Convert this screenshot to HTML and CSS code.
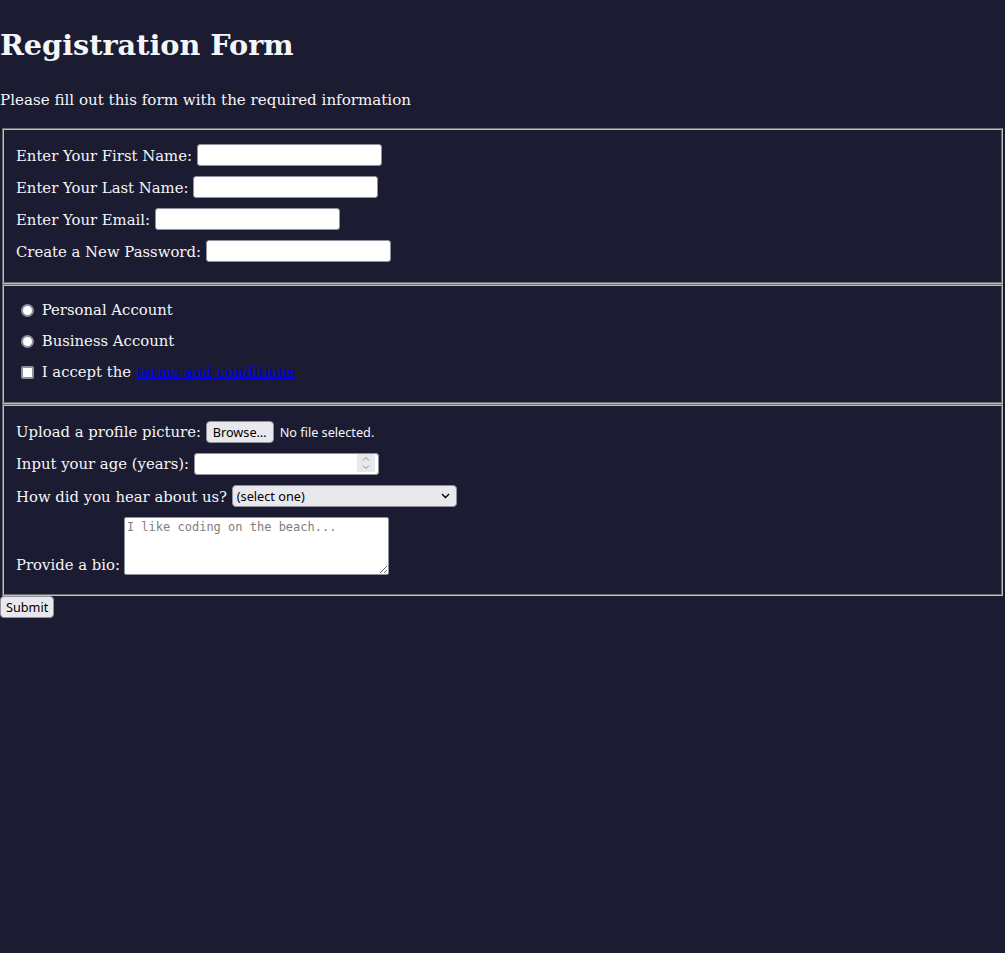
FILE: index.html
```html
<!DOCTYPE html>
<html lang="en">
  <head>
    <meta charset="UTF-8">
    <title>Registration Form</title>
    <link rel="stylesheet" href="styles.css">
  </head>
  <body class="page">
    <h1 class="title">Registration Form</h1>
    <p class="intro">Please fill out this form with the required information</p>
    <form class="form" method="post" action="#">
      <fieldset class="group">
        <label class="row" for="first-name">Enter Your First Name: <input class="field" id="first-name" type="text"></label>
        <label class="row" for="last-name">Enter Your Last Name: <input class="field" id="last-name" type="text"></label>
        <label class="row" for="email">Enter Your Email: <input class="field" id="email" type="email"></label>
        <label class="row" for="new-password">Create a New Password: <input class="field" id="new-password" type="password"></label>
      </fieldset>
      <fieldset class="group">
        <label class="row row-choice" for="personal-account"><input class="radio" id="personal-account" type="radio" name="account-type"> Personal Account</label>
        <label class="row row-choice" for="business-account"><input class="radio" id="business-account" type="radio" name="account-type"> Business Account</label>
        <label class="row row-choice" for="terms"><input class="check" id="terms" type="checkbox"> I accept the <a class="link" href="#">terms and conditions</a></label>
      </fieldset>
      <fieldset class="group">
        <div class="row">Upload a profile picture: <button type="button" class="btn file-btn">Browse…</button><span class="file-note">No file selected.</span></div>
        <label class="row" for="age">Input your age (years): <span class="num-wrap"><input class="field num" id="age" type="number" min="13" max="120"><svg class="spin" width="18" height="18" viewBox="0 0 18 18"><rect width="18" height="18" fill="#e9e9ed"/><path d="M6 6.5 L9 3.5 L12 6.5" fill="none" stroke="#8f8f9d" stroke-width="1"/><path d="M6 11.5 L9 14.5 L12 11.5" fill="none" stroke="#8f8f9d" stroke-width="1"/></svg></span></label>
        <label class="row" for="referrer">How did you hear about us? <span class="select-wrap"><select class="select" id="referrer">
              <option value="">(select one)</option>
              <option value="1">freeCodeCamp News</option>
              <option value="2">freeCodeCamp YouTube Channel</option>
              <option value="3">freeCodeCamp Forum</option>
              <option value="4">Other</option>
            </select><svg class="chev" width="9" height="6" viewBox="0 0 9 6"><path d="M1 1 L4.5 4.5 L8 1" fill="none" stroke="#000" stroke-width="1.4"/></svg></span></label>
        <label class="row row-bio" for="bio"><span class="bio-label">Provide a bio:</span><textarea class="bio" id="bio" rows="3" cols="30" placeholder="I like coding on the beach..."></textarea></label>
      </fieldset>
      <input class="btn submit" type="submit" value="Submit">
    </form>
  </body>
</html>
```

FILE: styles.css
```css
.page {
  width: 100%;
  height: 100vh;
  margin: 0;
  background-color: #1b1b32;
  color: #f5f6f7;
  font-family: "DejaVu Serif", serif;
  font-size: 14.85px;
}

.title {
  margin: 23px 0 22px;
  font-size: 28.7px;
  line-height: 44px;
  font-weight: bold;
}

.intro {
  margin: 0 0 17px;
  font-size: 15.1px;
  line-height: 22px;
}

.form {
  margin: 0;
}

.group {
  margin: 0 2px;
  padding: 5.6px 12px 10px;
  border: 2px groove #c0c0c0;
  min-width: 0;
}

.row {
  display: block;
  margin: 8px 0;
  line-height: 24px;
}

.row-choice {
  line-height: 23px;
}

.field {
  box-sizing: border-box;
  width: 185px;
  height: 22px;
  margin: 0;
  padding: 1px 3px;
  vertical-align: top;
  background: #fff;
  border: 1px solid #8f8f9d;
  border-radius: 3px;
  font: 12.7px "Noto Sans", sans-serif;
  color: #000;
}

.radio,
.check {
  appearance: none;
  -webkit-appearance: none;
  box-sizing: border-box;
  width: 13px;
  height: 13px;
  margin: 5px 3px 0 5px;
  vertical-align: top;
  background: #fff;
  border: 2px solid #8f8f9d;
}

.radio {
  border-radius: 50%;
}

.check {
  margin-left: 5px;
  border-radius: 2px;
}

.link {
  color: #0000ee;
  text-decoration: underline;
}

.btn {
  box-sizing: border-box;
  height: 22px;
  padding: 0 6px;
  background: #e9e9ed;
  border: 1px solid #8f8f9d;
  border-radius: 4px;
  color: #000;
  font: 12.7px/18px "Noto Sans", sans-serif;
  vertical-align: top;
}

.file-btn {
  margin: 1px 0 0;
}

.file-note {
  margin-left: 6px;
  font-family: "Noto Sans", sans-serif;
  font-size: 12.7px;
  line-height: 1;
}

.num-wrap,
.select-wrap {
  position: relative;
  display: inline-block;
  vertical-align: top;
}

.num-wrap {
  margin-top: 1px;
}

.num {
  appearance: textfield;
  -moz-appearance: textfield;
}

.num::-webkit-inner-spin-button,
.num::-webkit-outer-spin-button {
  -webkit-appearance: none;
  margin: 0;
}

.spin {
  position: absolute;
  right: 4px;
  top: 1px;
  pointer-events: none;
}

.select {
  appearance: none;
  -webkit-appearance: none;
  box-sizing: border-box;
  width: 225px;
  height: 22px;
  margin: 0;
  padding: 0 4px;
  background: #e9e9ed;
  border: 1px solid #8f8f9d;
  border-radius: 4px;
  color: #000;
  font: 12.7px "Noto Sans", sans-serif;
  vertical-align: top;
}

.chev {
  position: absolute;
  right: 7px;
  top: 8px;
  pointer-events: none;
}

.row-bio {
  display: flex;
  align-items: flex-end;
  gap: 4px;
}

.bio-label {
  line-height: 22px;
}

.bio {
  box-sizing: border-box;
  width: 265px;
  height: 58px;
  margin: 0 0 1px;
  padding: 2px;
  background: #fff;
  border: 1px solid #8f8f9d;
  border-radius: 2px;
  color: #000;
  font: 12px/14px "DejaVu Sans Mono", monospace;
}

.bio::placeholder {
  color: #808080;
}

.submit {
  margin: 0;
  padding: 0 5px;
}
```
